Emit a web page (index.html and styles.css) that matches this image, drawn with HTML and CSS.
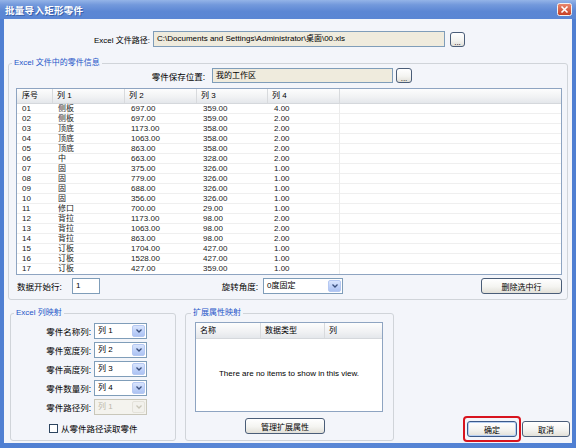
FILE: index.html
```html
<!DOCTYPE html>
<html>
<head>
<meta charset="utf-8">
<link rel="stylesheet" href="styles.css">
</head>
<body>
<div class="window">
  <div class="titlebar">
    <span class="title">批量导入矩形零件</span>
    <svg class="close" width="15" height="13" viewBox="0 0 15 13"><defs><linearGradient id="cg" x1="0" y1="0" x2="0" y2="1"><stop offset="0" stop-color="#ea8a70"/><stop offset="1" stop-color="#c63c21"/></linearGradient></defs><rect x="0.5" y="0.5" width="14" height="12" rx="2" fill="url(#cg)" stroke="#f2f2f2"/><path d="M4.5 3.5 L10.5 9.5 M10.5 3.5 L4.5 9.5" stroke="#fff" stroke-width="1.6"/></svg>
  </div>
  <div class="content">
    <div class="path-row">
      <span class="lbl path-lbl">Excel 文件路径:</span>
      <div class="input readonly path-input">C:\Documents and Settings\Administrator\桌面\00.xls</div>
      <button class="btn dots">...</button>
    </div>

    <fieldset class="group g-info">
      <legend>Excel 文件中的零件信息</legend>
      <div class="save-row">
        <span class="lbl save-lbl">零件保存位置:</span>
        <div class="input readonly save-input">我的工作区</div>
        <button class="btn dots small">...</button>
      </div>
      <div class="listview">
        <div class="lv-head lv-grid">
          <span>序号</span><span>列 1</span><span>列 2</span><span>列 3</span><span>列 4</span><span></span>
        </div>
        <div class="lv-row lv-grid"><span>01</span><span>侧板</span><span>697.00</span><span>359.00</span><span>4.00</span><span></span></div>
        <div class="lv-row lv-grid"><span>02</span><span>侧板</span><span>697.00</span><span>359.00</span><span>2.00</span><span></span></div>
        <div class="lv-row lv-grid"><span>03</span><span>顶底</span><span>1173.00</span><span>358.00</span><span>2.00</span><span></span></div>
        <div class="lv-row lv-grid"><span>04</span><span>顶底</span><span>1063.00</span><span>358.00</span><span>2.00</span><span></span></div>
        <div class="lv-row lv-grid"><span>05</span><span>顶底</span><span>863.00</span><span>358.00</span><span>2.00</span><span></span></div>
        <div class="lv-row lv-grid"><span>06</span><span>中</span><span>663.00</span><span>328.00</span><span>2.00</span><span></span></div>
        <div class="lv-row lv-grid"><span>07</span><span>固</span><span>375.00</span><span>326.00</span><span>1.00</span><span></span></div>
        <div class="lv-row lv-grid"><span>08</span><span>固</span><span>779.00</span><span>326.00</span><span>1.00</span><span></span></div>
        <div class="lv-row lv-grid"><span>09</span><span>固</span><span>688.00</span><span>326.00</span><span>1.00</span><span></span></div>
        <div class="lv-row lv-grid"><span>10</span><span>固</span><span>356.00</span><span>326.00</span><span>1.00</span><span></span></div>
        <div class="lv-row lv-grid"><span>11</span><span>修口</span><span>700.00</span><span>29.00</span><span>1.00</span><span></span></div>
        <div class="lv-row lv-grid"><span>12</span><span>背拉</span><span>1173.00</span><span>98.00</span><span>2.00</span><span></span></div>
        <div class="lv-row lv-grid"><span>13</span><span>背拉</span><span>1063.00</span><span>98.00</span><span>2.00</span><span></span></div>
        <div class="lv-row lv-grid"><span>14</span><span>背拉</span><span>863.00</span><span>98.00</span><span>2.00</span><span></span></div>
        <div class="lv-row lv-grid"><span>15</span><span>订板</span><span>1704.00</span><span>427.00</span><span>1.00</span><span></span></div>
        <div class="lv-row lv-grid"><span>16</span><span>订板</span><span>1528.00</span><span>427.00</span><span>1.00</span><span></span></div>
        <div class="lv-row lv-grid"><span>17</span><span>订板</span><span>427.00</span><span>359.00</span><span>1.00</span><span></span></div>
      </div>
      <div class="opt-row">
        <span class="lbl start-lbl">数据开始行:</span>
        <div class="input start-input">1</div>
        <span class="lbl rot-lbl">旋转角度:</span>
        <div class="select rot-select"><span class="sel-text">0度固定</span><span class="arrow"><svg width="6" height="4" viewBox="0 0 6 4"><path d="M0.5 0.5 L3 3 L5.5 0.5" fill="none" stroke="#3a4f7c" stroke-width="1.3"/></svg></span></div>
        <button class="btn del-btn">删除选中行</button>
      </div>
    </fieldset>

    <div class="bottom-row">
      <fieldset class="group g-map">
        <legend>Excel 列映射</legend>
        <div class="map-grid">
          <span class="lbl">零件名称列:</span>
          <div class="select"><span class="sel-text">列 1</span><span class="arrow"><svg width="6" height="4" viewBox="0 0 6 4"><path d="M0.5 0.5 L3 3 L5.5 0.5" fill="none" stroke="#3a4f7c" stroke-width="1.3"/></svg></span></div>
          <span class="lbl">零件宽度列:</span>
          <div class="select"><span class="sel-text">列 2</span><span class="arrow"><svg width="6" height="4" viewBox="0 0 6 4"><path d="M0.5 0.5 L3 3 L5.5 0.5" fill="none" stroke="#3a4f7c" stroke-width="1.3"/></svg></span></div>
          <span class="lbl">零件高度列:</span>
          <div class="select"><span class="sel-text">列 3</span><span class="arrow"><svg width="6" height="4" viewBox="0 0 6 4"><path d="M0.5 0.5 L3 3 L5.5 0.5" fill="none" stroke="#3a4f7c" stroke-width="1.3"/></svg></span></div>
          <span class="lbl">零件数量列:</span>
          <div class="select"><span class="sel-text">列 4</span><span class="arrow"><svg width="6" height="4" viewBox="0 0 6 4"><path d="M0.5 0.5 L3 3 L5.5 0.5" fill="none" stroke="#3a4f7c" stroke-width="1.3"/></svg></span></div>
          <span class="lbl">零件路径列:</span>
          <div class="select disabled"><span class="sel-text">列 1</span><span class="arrow"><svg width="6" height="4" viewBox="0 0 6 4"><path d="M0.5 0.5 L3 3 L5.5 0.5" fill="none" stroke="#c9c6b8" stroke-width="1.3"/></svg></span></div>
        </div>
        <div class="check-row"><span class="checkbox"></span><span class="check-text">从零件路径读取零件</span></div>
      </fieldset>

      <fieldset class="group g-ext">
        <legend>扩展属性映射</legend>
        <div class="ext-view">
          <div class="ext-head"><span>名称</span><span>数据类型</span><span>列</span></div>
          <div class="ext-empty">There are no items to show in this view.</div>
        </div>
        <button class="btn manage-btn">管理扩展属性</button>
      </fieldset>

      <div class="actions">
        <span class="highlight"><button class="btn ok-btn">确定</button></span>
        <button class="btn cancel-btn">取消</button>
      </div>
    </div>
  </div>
</div>
</body>
</html>
```
FILE: styles.css
```css
* { box-sizing: border-box; }
html, body { margin: 0; padding: 0; }
body {
  width: 576px; height: 448px; overflow: hidden;
  font-family: "Liberation Sans", "Noto Sans CJK SC", sans-serif;
  font-size: 8px; color: #000;
}
.window {
  width: 576px; height: 448px;
  display: flex; flex-direction: column;
  background: linear-gradient(90deg, #4f7fd2, #5b88d6 50%, #4f7fd2);
}
.titlebar {
  height: 19px; flex: none;
  display: flex; align-items: center; justify-content: space-between;
  padding: 0 4px 0 5px;
  background: linear-gradient(#94b4e8, #7399dc 25%, #5c87d4 60%, #5a86d4);
}
.title {
  color: #fff; font-weight: bold; font-size: 9.5px;
  text-shadow: 1px 1px 0 #3a5fa8; letter-spacing: 0.3px;
}
.close { display: block; }
.content {
  flex: 1;
  margin: 0 4px 5px 4px;
  background: #f3f5fa;
  display: flex; flex-direction: column;
}
.lbl { white-space: nowrap; }

/* inputs */
.input {
  height: 16px; border: 1px solid #7f9db9; background: #fff;
  padding: 0 3px; line-height: 14px; white-space: nowrap; overflow: hidden;
}
.input.readonly { background: #efebdd; }

.btn {
  font: inherit; color: #000;
  border: 1px solid #4a5d78; border-radius: 3px;
  background: linear-gradient(#ffffff, #f4f4f1 55%, #e2e0d8);
  padding: 0; cursor: default;
}
.dots { width: 15px; height: 15px; line-height: 16px; padding-top: 2px; letter-spacing: 0; font-size: 8px; }

/* path row */
.path-row {
  margin-top: 12px; height: 16px;
  display: flex; align-items: center;
}
.path-lbl { width: 146px; text-align: right; }
.path-input { width: 292px; margin-left: 3px; }
.path-row .dots { margin-left: 5px; }

/* group boxes */
.group {
  margin: 0; border: 1px solid #d0d4d9; border-radius: 3px;
  min-width: 0;
}
.group legend {
  padding: 0 2px; line-height: 10px; height: 10px;
  color: #1f55c8; font-size: 8px;
}
.g-info {
  margin: 11px 0 0 4px; width: 560px;
  padding: 0 5px 5px 7px;
}
.g-info legend { margin-left: -4px; }

.save-row { height: 15px; display: flex; align-items: center; }
.save-lbl { width: 194px; text-align: right; padding-right: 5px; font-size: 8.5px; }
.save-input { width: 181px; height: 15px; line-height: 13px; margin-left: 2px; }
.save-row .dots { margin-left: 3px; width: 16px; }

/* list view */
.listview {
  margin-top: 5px; width: 546px; height: 187px;
  border: 1px solid #8ea4c1; background: #fff;
}
.lv-grid {
  display: grid;
  grid-template-columns: 36px 72px 72px 71px 72px 1fr;
}
.lv-head {
  height: 15px; line-height: 14px;
  background: linear-gradient(#fdfdfd, #f0f1f3 60%, #e4e7eb);
  border-bottom: 1px solid #d5d8dc;
}
.lv-head span { padding-left: 4px; border-right: 1px solid #d8dadd; }
.lv-head span:first-child { padding-left: 5px; }
.lv-head span:last-child { border-right: 0; }
.lv-row {
  height: 10px; line-height: 10px; color: #1a1a1a;
  border-bottom: 1px solid #efefef;
}
.lv-row span { padding-left: 6px; white-space: nowrap; }
.lv-row span:nth-child(1) { padding-left: 5px; }
.lv-row span:nth-child(2) { padding-left: 5px; }
.lv-row span:nth-child(5) { border-right: 1px solid #ececec; }
.lv-row:last-child { border-bottom: 0; }

/* options row */
.opt-row { margin-top: 3px; height: 16px; display: flex; align-items: center; }
.start-lbl { width: 56px; padding-left: 1px; font-size: 8.5px; }
.start-input { width: 28px; }
.rot-lbl { width: 163px; text-align: right; padding-right: 5px; font-size: 8.5px; }
.select {
  height: 16px; border: 1px solid #7f9db9; background: #fff;
  display: flex; align-items: stretch; padding: 1px;
}
.sel-text { flex: 1; padding-left: 2px; line-height: 12px; white-space: nowrap; overflow: hidden; }
.arrow {
  width: 13px; flex: none; border-radius: 2px;
  background: linear-gradient(#d9e5fd, #bccff8 60%, #adc3f2);
  border: 1px solid #b5c8f2;
  display: flex; align-items: center; justify-content: center;
}
.rot-select { width: 80px; }
.del-btn { margin-left: auto; width: 81px; height: 16px; }

/* bottom */
.bottom-row {
  margin-top: 8px; height: 134px;
  display: flex; align-items: flex-start;
}
.g-map {
  margin-left: 6px; width: 166px; height: 133px;
  padding: 5px 0 0 0;
}
.g-map legend { margin-left: 3px; }
.map-grid {
  display: grid; grid-template-columns: 80px 53px;
  column-gap: 3px; row-gap: 3px;
  grid-auto-rows: 16px; align-items: center;
}
.map-grid .lbl { text-align: right; font-size: 8.5px; }
.select.disabled { background: #f4f3ee; border-color: #c9c7ba; color: #bdb9aa; }
.select.disabled .arrow { background: #f2f1ec; border-color: #e4e2da; }
.check-row {
  margin-top: 7px; height: 12px; padding-left: 38px;
  display: flex; align-items: center; gap: 3px;
}
.check-text { font-size: 8.5px; }
.checkbox { width: 9px; height: 9px; border: 1px solid #2d4560; background: #fff; }

.g-ext {
  margin-left: 9px; width: 209px; height: 133px;
  padding: 4px 10px 0 9px;
  display: flex; flex-direction: column;
}
.g-ext legend { margin-left: -4px; }
.ext-view {
  height: 90px; border: 1px solid #8ea4c1; background: #fff;
  display: flex; flex-direction: column;
}
.ext-head {
  height: 16px; line-height: 15px; display: grid;
  grid-template-columns: 65px 64px 1fr;
  background: linear-gradient(#fdfdfd, #f0f1f3 60%, #e4e7eb);
  border-bottom: 1px solid #d5d8dc;
}
.ext-head span { padding-left: 4px; border-right: 1px solid #d8dadd; }
.ext-head span:last-child { border-right: 0; }
.ext-empty { flex: 1; display: flex; align-items: center; justify-content: center; padding-bottom: 4px; }
.manage-btn { margin-top: 6px; margin-left: 50px; width: 80px; height: 16px; }

.actions {
  margin-left: auto; margin-right: 2px; align-self: flex-end;
  display: flex; align-items: center; gap: 1px;
}
.highlight {
  display: block; border: 2px solid #d8141e; border-radius: 4px;
  padding: 3px 2px;
}
.ok-btn { display: block; width: 50px; height: 16px; border-color: #3b5a8a; box-shadow: inset 0 0 0 1px #b9d0f2; }
.cancel-btn { width: 48px; height: 16px; }
```
